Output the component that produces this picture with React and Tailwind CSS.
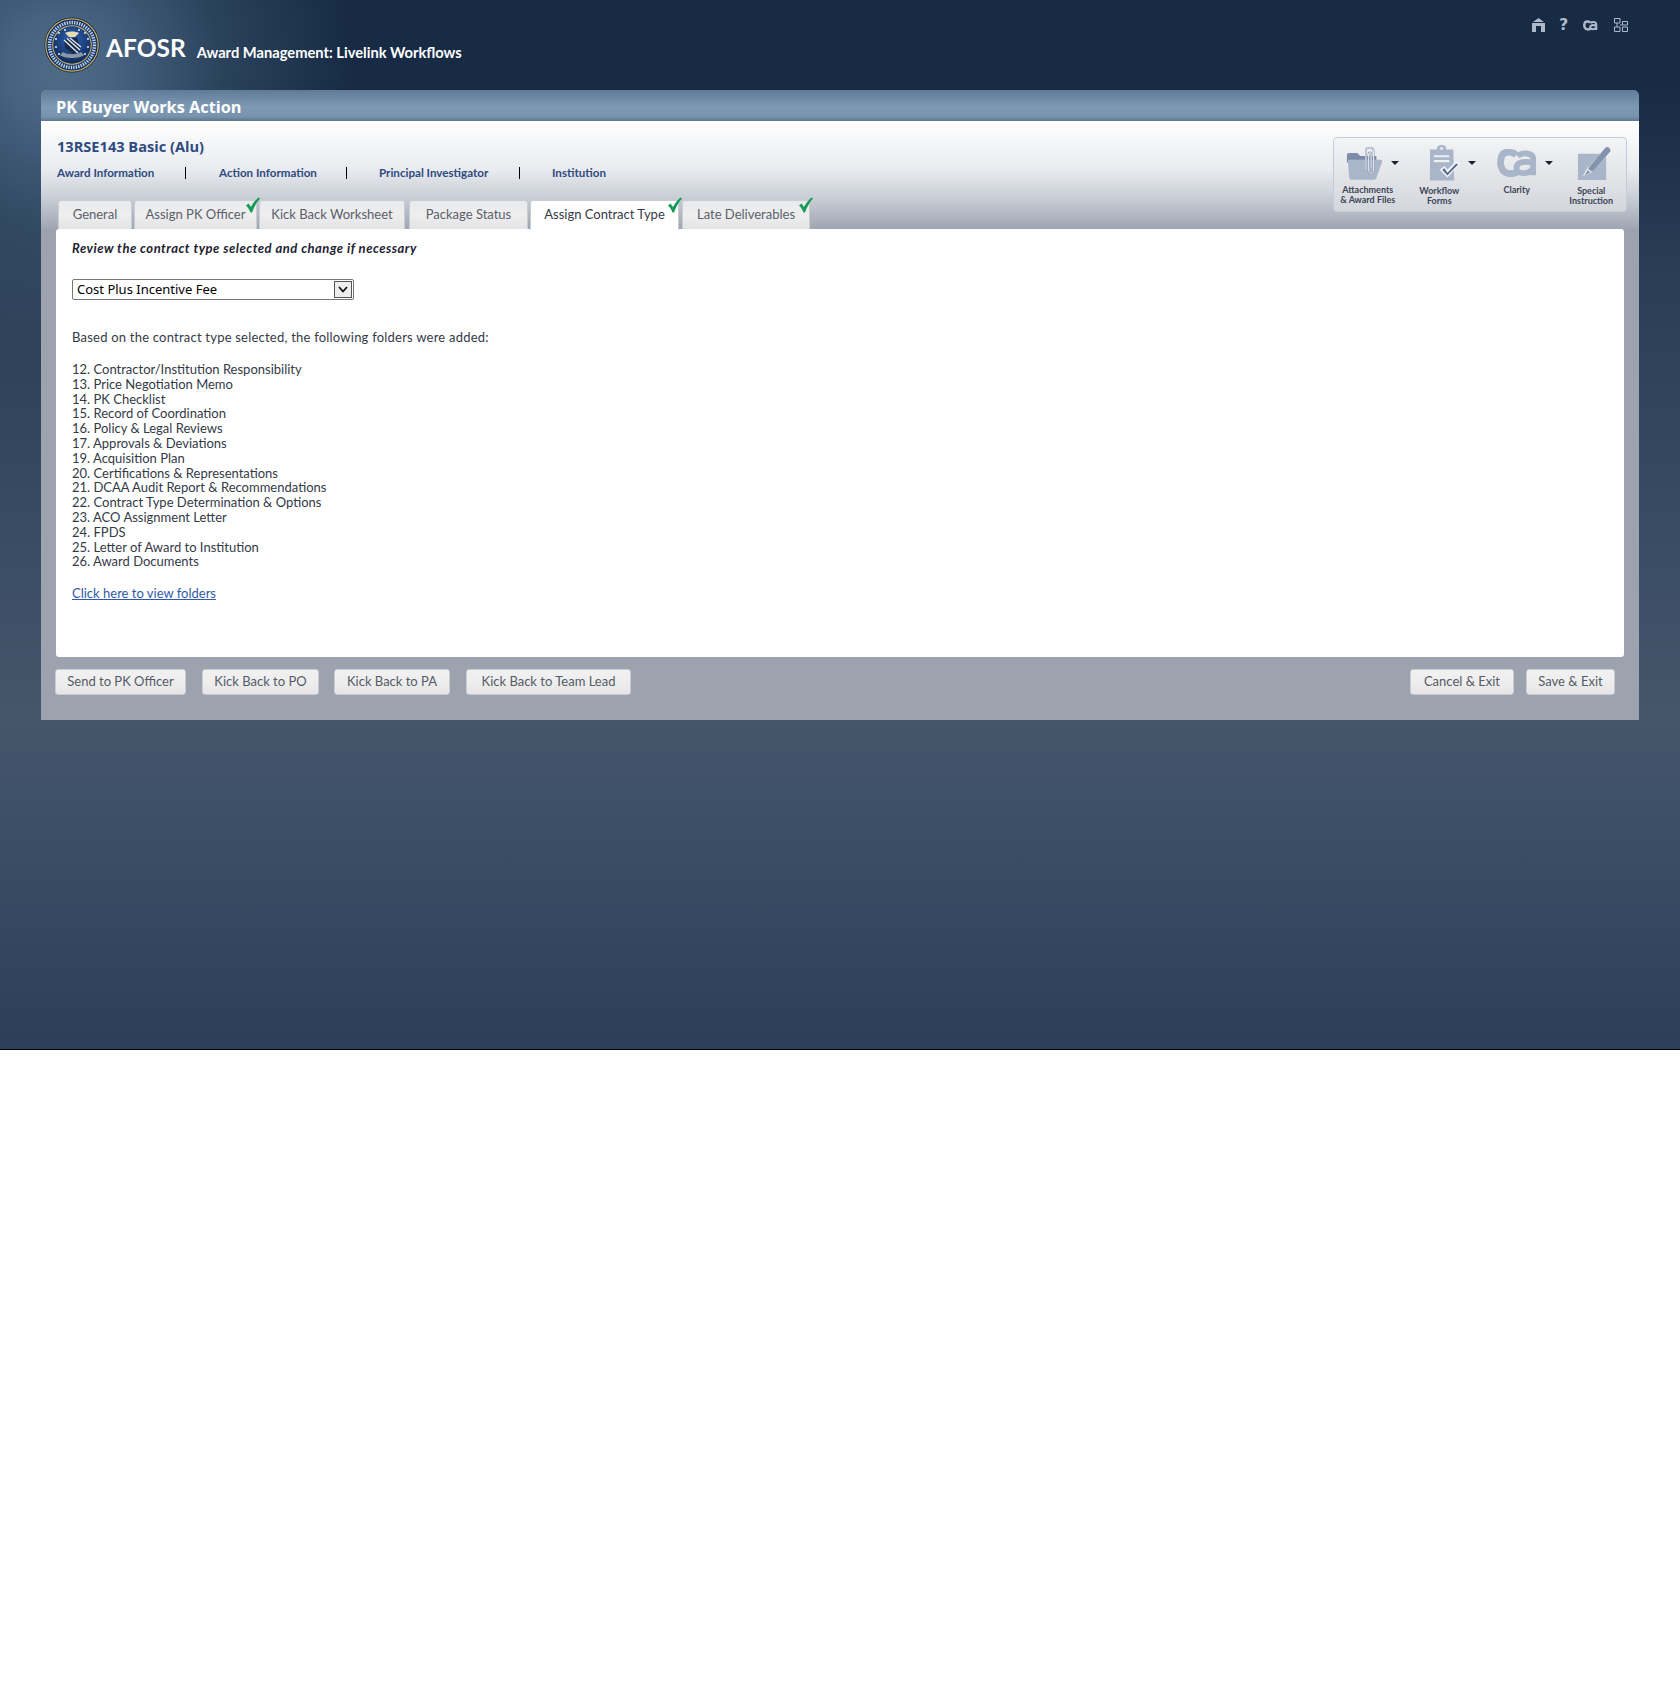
import React from 'react';

const body = { fontFamily: 'Lato, "Open Sans", sans-serif' };
const heading = { fontFamily: '"Open Sans", sans-serif' };

const tabs = [
  { label: 'General', w: 'w-[74px]' },
  { label: 'Assign PK Officer', w: 'w-[123px] ml-[2px]', done: true },
  { label: 'Kick Back Worksheet', w: 'w-[146px] ml-[2px]' },
  { label: 'Package Status', w: 'w-[119px] ml-[4px]' },
  { label: 'Assign Contract Type', w: 'w-[149px] ml-[2px]', done: true, active: true },
  { label: 'Late Deliverables', w: 'w-[128px] ml-[3px]', done: true },
];

const folders = [
  '12. Contractor/Institution Responsibility',
  '13. Price Negotiation Memo',
  '14. PK Checklist',
  '15. Record of Coordination',
  '16. Policy & Legal Reviews',
  '17. Approvals & Deviations',
  '19. Acquisition Plan',
  '20. Certifications & Representations',
  '21. DCAA Audit Report & Recommendations',
  '22. Contract Type Determination & Options',
  '23. ACO Assignment Letter',
  '24. FPDS',
  '25. Letter of Award to Institution',
  '26. Award Documents',
];

const Check = () => (
  <svg className="absolute -right-[4px] -top-[4px] w-[15px] h-[16px]" viewBox="0 0 15 16">
    <path d="M1 8.5 L3.5 6.5 L6 10 C8 6 10.5 3 13.5 0.5 L15 1.5 C11.5 5.5 9 10 7 15.5 L5.5 15.5 C4.5 12.5 3 10.5 1 8.5Z" fill="#169a55" />
  </svg>
);

const Seal = () => (
  <svg width="56" height="56" viewBox="0 0 56 56" className="shrink-0">
    <defs>
      <radialGradient id="sealBlue" cx="50%" cy="35%" r="65%">
        <stop offset="0%" stopColor="#2d63b5" />
        <stop offset="100%" stopColor="#102a58" />
      </radialGradient>
    </defs>
    <circle cx="28" cy="28" r="27.5" fill="#10233f" />
    <circle cx="28" cy="28" r="26.2" fill="none" stroke="#c2ae63" strokeWidth="1.2" />
    <circle cx="28" cy="28" r="25" fill="#1c3e78" />
    <circle cx="28" cy="28" r="22.5" fill="none" stroke="#c4d0e4" strokeWidth="3.4" strokeDasharray="1.3 1.2" />
    <circle cx="28" cy="28" r="19.8" fill="#cdb768" />
    <circle cx="28" cy="28" r="18.8" fill="url(#sealBlue)" />
    {[[12, 22], [15, 16], [21, 13], [35, 13], [41, 16], [44, 22], [44, 30], [12, 30], [15, 37], [41, 37]].map(([x, y]) => (
      <circle key={`${x}-${y}`} cx={x} cy={y} r="0.9" fill="#fff" />
    ))}
    <path d="M21 16 C25 14 31 14 35 16 L31 20 L25 20Z" fill="#e8dcb0" />
    <path d="M20 23 L33 20 L36 31 L30 37 L21 31Z" fill="#1a2b4a" />
    <path d="M20 23 L34 36 M23 21.5 L36 33 M26 21 L37 30" stroke="#dfe6f1" strokeWidth="1.4" />
    <path d="M16 38 C20 42 36 42 40 38 L37 35 C33 38 23 38 19 35Z" fill="#8f96a3" />
  </svg>
);

const Caret = () => (
  <span className="w-0 h-0 border-x-[4px] border-x-transparent border-t-[4px] border-t-[#1c2230]" />
);

const FolderIcon = () => (
  <svg width="38" height="34" viewBox="0 0 40 35">
    <path d="M1 9 C1 8 2 7 3 7 L12 7 L15 10 L32 10 L32 15 L8 15 L5 17 L1 17Z" fill="#7c8ca8" />
    <path d="M2 14 L36 14 C38 14 38.5 15 38 16.5 L32 33 C31.5 34.5 31 35 29 35 L6 35 C4 35 3.5 34 3.3 32Z" fill="#a9b5c9" />
    <path d="M21 25 L21 5 C21 0.5 29 0.5 29 5 L29 25 C29 30 23.8 30 23.8 25 L23.8 8 C23.8 6 26.4 6 26.4 8 L26.4 23" fill="none" stroke="#8c99af" strokeWidth="2" />
    <path d="M21 25 L21 5 C21 0.5 29 0.5 29 5 L29 25 C29 30 23.8 30 23.8 25 L23.8 8 C23.8 6 26.4 6 26.4 8 L26.4 23" fill="none" stroke="#eef1f5" strokeWidth="1" />
  </svg>
);

const FormIcon = () => (
  <svg width="33" height="38" viewBox="0 0 34 38">
    <path d="M2 5 L9 5 C9 -1 19 -1 19 5 L26 5 L27 37 L2 37Z" fill="#a9b5c9" />
    <circle cx="14" cy="4" r="1.8" fill="#dfe3ea" />
    <path d="M6 12 L22 12 M6 17 L22 17" stroke="#eef0f4" strokeWidth="2.2" />
    <path d="M12 26 L17 22 L20 26 L29 17 L33 20 L20 34Z" fill="#f4f6f8" />
    <path d="M14.5 26 L17 24.5 L20 29 L29 19.5 L31 20.5 L20 32Z" fill="#5d6d8c" />
  </svg>
);

const CaLogo = ({ small }) => (
  <svg width={small ? 15 : 41} height={small ? 11 : 28} viewBox="0 0 42 28">
    <path d="M20 6 C16 2 6 1 4.500 8 C2 16 5 25 14 25 C18 25 20 24 22 22" fill="none" stroke={small ? '#aeb9cb' : '#a9b5c9'} strokeWidth="7" />
    <path d="M21 7 C25 3 36 3 37 9 L37 26.500 M37 14 C26 11 20 14 20 19 C20 26 32 26 37 20" fill="none" stroke={small ? '#aeb9cb' : '#a9b5c9'} strokeWidth="6" />
  </svg>
);

const NoteIcon = () => (
  <svg width="35" height="37" viewBox="0 0 36 38">
    <path d="M1 9 L24 9 L9 26 L6 32 L13 29 L30 12 L30 36 L1 36Z" fill="#a9b5c9" />
    <path d="M13 22 L29 3 C31 0 36 4 34 7 L17 26 L8 31Z" fill="#8493ad" />
    <path d="M11 25 L15 28" stroke="#e4e8ee" strokeWidth="1.5" />
  </svg>
);

const TopIcons = () => (
  <div className="flex items-center pt-[18px] pr-[52px]">
    <svg width="15" height="14" viewBox="0 0 15 14">
      <path d="M7.5 0 L13 4 L2 4Z M1 5 L14 5 L14 14 L10 14 L10 8 L5 8 L5 14 L1 14Z" fill="#aeb9cb" />
    </svg>
    <span className="ml-[13px] text-[16px] leading-[14px] font-bold text-[#aeb9cb] w-[9px]" style={{ fontFamily: '"DejaVu Sans", sans-serif' }}>?</span>
    <span className="ml-[15px] flex"><CaLogo small /></span>
    <svg className="ml-[16px]" width="14" height="14" viewBox="0 0 14 14" fill="none" stroke="#aeb9cb" strokeWidth="1">
      <path d="M0.5 0.5 H6 V5 H0.5Z M0.5 9 H6 V13.5 H0.5Z M8.5 9 H13.5 V13.5 H8.5Z M8.5 3.5 H13.5 V7 H8.5Z M6 7 H8.5 M3 5 V9" />
    </svg>
  </div>
);

const Tool = ({ w, icon, label, caret, shift, lift }) => (
  <div className={`${w} flex flex-col items-center pt-[6px]`}>
    <div className={`h-[38px] flex items-center gap-[7px] ${shift}`}>
      {icon}
      {caret && <Caret />}
    </div>
    <div className={`${lift} text-[9px] leading-[10px] font-bold text-[#3c4657] text-center whitespace-nowrap`}>{label}</div>
  </div>
);

const Btn = ({ w, children }) => (
  <button className={`${w} h-[26px] rounded-[3px] border border-[#c9cdd2] bg-[linear-gradient(#f1f1f1,#ededed_60%,#e4e4e4)] text-[13px] text-[#555b66]`}>
    {children}
  </button>
);

export default function App() {
  return (
    <div className="min-h-[1691px] bg-white" style={body}>
      <div className="h-[1050px] border-b border-black bg-[radial-gradient(circle_at_60px_70px,#4e6b86_0px,#466280_55px,rgba(60,86,112,0.55)_160px,rgba(23,43,69,0)_290px),linear-gradient(#172b45_0px,#172b45_90px,#2a3d55_270px,#45566b_720px,#2b3f5a_1049px)]">
        <header className="h-[90px] flex justify-between items-start">
          <div className="flex items-center pl-[44px] pt-[17px]">
            <Seal />
            <span className="ml-[6px] mt-[6px] text-[24.5px] leading-[30px] font-bold text-white">AFOSR</span>
            <span className="ml-[11px] mt-[14px] text-[14.7px] font-bold text-white">Award Management: Livelink Workflows</span>
          </div>
          <TopIcons />
        </header>

        <main className="mx-[41px] h-[630px] rounded-t-[6px] bg-[#9ca3ae]">
          <div className="h-[31px] pl-[15px] rounded-t-[6px] bg-[linear-gradient(#5f7b98,#7e99b3_55%,#7893ad_85%,#5e7791)] text-[16.3px] leading-[34px] font-bold text-white" style={heading}>
            PK Buyer Works Action
          </div>

          <div className="h-[108px] flex justify-between pl-[16px] pr-[12px] bg-[linear-gradient(#ffffff,#e8ebef_45%,#c8cdd5_72%,#9fa6b1)]">
            <div className="flex flex-col">
              <div className="mt-[15px] text-[14.6px] leading-[20px] font-bold text-[#2f4a80]" style={heading}>13RSE143 Basic (Alu)</div>
              <nav className="mt-[10px] flex items-center text-[11.6px] leading-[14px] font-bold text-[#2f4a80] whitespace-nowrap">
                <span className="w-[97px]">Award Information</span>
                <span className="ml-[31px] w-px h-[12px] bg-black" />
                <span className="ml-[33px] w-[96px]">Action Information</span>
                <span className="ml-[31px] w-px h-[12px] bg-black" />
                <span className="ml-[32px] w-[109px]">Principal Investigator</span>
                <span className="ml-[31px] w-px h-[12px] bg-black" />
                <span className="ml-[32px]">Institution</span>
              </nav>
              <div className="mt-auto ml-[1px] flex">
                {tabs.map((t) => (
                  <div
                    key={t.label}
                    className={`${t.w} relative h-[29px] rounded-t-[3px] border border-b-0 text-center text-[13px] leading-[27px] whitespace-nowrap ${
                      t.active
                        ? 'z-10 h-[30px] -mb-px bg-white border-[#c9cdd2] text-[#333a46]'
                        : 'bg-[linear-gradient(#e9eaec,#eeeeee_50%,#e2e3e5)] border-[#c9ced5] text-[#5a606b]'
                    }`}
                  >
                    {t.label}
                    {t.done && <Check />}
                  </div>
                ))}
              </div>
            </div>

            <div className="mt-[16px] h-[75px] w-[294px] flex rounded-[4px] border border-[#c5cbdc] bg-[linear-gradient(#f3f4f6,#d3d6dc)]">
              <Tool w="w-[68px]" icon={<FolderIcon />} caret shift="pl-[10px]" lift="mt-[3px]" label={<>Attachments<br />&amp; Award Files</>} />
              <Tool w="w-[76px]" icon={<FormIcon />} caret shift="pl-[26px]" lift="mt-[4px]" label={<>Workflow<br />Forms</>} />
              <Tool w="w-[80px]" icon={<CaLogo />} caret shift="pl-[16px]" lift="mt-[3px]" label="Clarity" />
              <Tool w="w-[70px]" icon={<NoteIcon />} shift="pl-[6px]" lift="mt-[4px]" label={<>Special<br />Instruction</>} />
            </div>
          </div>

          <section className="mx-[15px] h-[428px] rounded-[3px] bg-white pl-[16px] pt-[11px] text-[13px] text-[#333a46]">
            <p className="leading-[16px] font-bold italic text-[#1c2230] tracking-[0.5px]">Review the contract type selected and change if necessary</p>
            <div className="relative mt-[23px] w-[282px] h-[21px]">
              <select
                defaultValue="cpif"
                className="w-full h-full appearance-none rounded-[2px] border border-[#777] bg-white pl-[4px] text-[13px] text-black"
                style={{ fontFamily: '"Noto Sans", sans-serif' }}
              >
                <option value="cpif">Cost Plus Incentive Fee</option>
              </select>
              <span className="absolute right-[2px] top-[2px] w-[18px] h-[17px] flex items-center justify-center border border-[#555] bg-[#eeeeee]">
                <svg width="10" height="7" viewBox="0 0 10 7"><path d="M1 1 L5 5.5 L9 1" fill="none" stroke="#111" strokeWidth="1.8" /></svg>
              </span>
            </div>
            <p className="mt-[29px] leading-[16px] tracking-[0.22px]">Based on the contract type selected, the following folders were added:</p>
            <ul className="mt-[17px] leading-[14.8px]">
              {folders.map((f) => <li key={f}>{f}</li>)}
            </ul>
            <a href="#folders" className="block mt-[16px] leading-[16px] text-[#2f5aa8] underline">Click here to view folders</a>
          </section>

          <footer className="pt-[12px] pl-[14px] pr-[24px] flex justify-between">
            <div className="flex">
              <Btn w="w-[131px]">Send to PK Officer</Btn>
              <Btn w="w-[117px] ml-[16px]">Kick Back to PO</Btn>
              <Btn w="w-[116px] ml-[15px]">Kick Back to PA</Btn>
              <Btn w="w-[165px] ml-[16px]">Kick Back to Team Lead</Btn>
            </div>
            <div className="flex gap-[12px]">
              <Btn w="w-[104px]">Cancel &amp; Exit</Btn>
              <Btn w="w-[89px]">Save &amp; Exit</Btn>
            </div>
          </footer>
        </main>
      </div>
    </div>
  );
}
